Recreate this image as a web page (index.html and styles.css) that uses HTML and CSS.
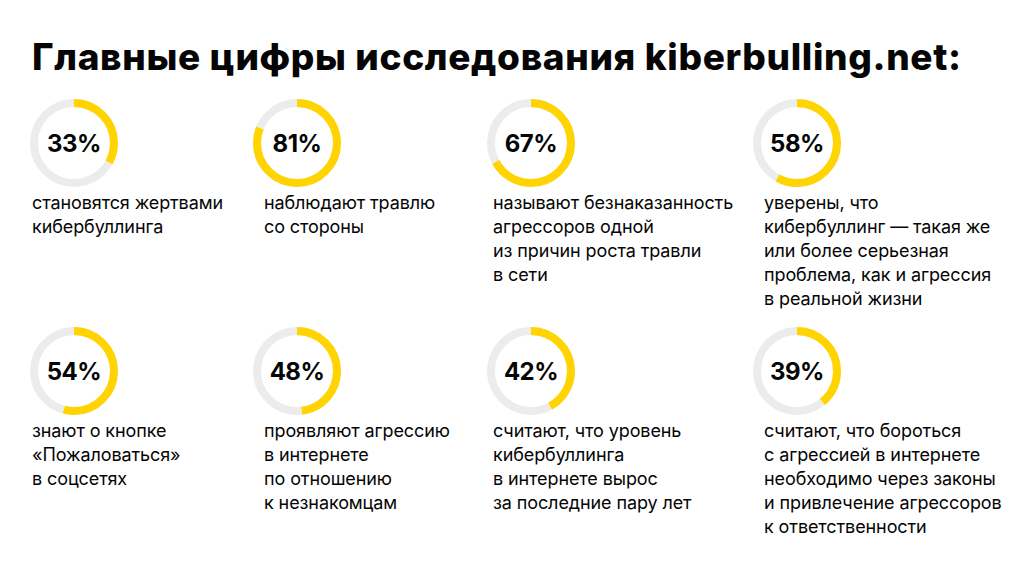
FILE: index.html
```html
<!DOCTYPE html>
<html lang="ru">
<head>
<meta charset="utf-8">
<title>Главные цифры исследования kiberbulling.net</title>
<link rel="stylesheet" href="styles.css">
</head>
<body>
<main class="page">
  <h1 class="title">Главные цифры исследования kiberbulling.net:</h1>
  <div class="grid">
    <div class="stat">
      <div class="donut">
        <svg viewBox="0 0 88 88" width="88" height="88"><circle class="track" cx="44" cy="44" r="40"/><circle class="fill" cx="44" cy="44" r="40" style="stroke-dasharray: 82.94 251.33"/></svg>
        <span class="value">33%</span>
      </div>
      <p class="desc">становятся жертвами<br>кибербуллинга</p>
    </div>
    <div class="stat">
      <div class="donut">
        <svg viewBox="0 0 88 88" width="88" height="88"><circle class="track" cx="44" cy="44" r="40"/><circle class="fill" cx="44" cy="44" r="40" style="stroke-dasharray: 203.58 251.33"/></svg>
        <span class="value">81%</span>
      </div>
      <p class="desc">наблюдают травлю<br>со стороны</p>
    </div>
    <div class="stat">
      <div class="donut">
        <svg viewBox="0 0 88 88" width="88" height="88"><circle class="track" cx="44" cy="44" r="40"/><circle class="fill" cx="44" cy="44" r="40" style="stroke-dasharray: 168.39 251.33"/></svg>
        <span class="value">67%</span>
      </div>
      <p class="desc">называют безнаказанность<br>агрессоров одной<br>из причин роста травли<br>в сети</p>
    </div>
    <div class="stat">
      <div class="donut">
        <svg viewBox="0 0 88 88" width="88" height="88"><circle class="track" cx="44" cy="44" r="40"/><circle class="fill" cx="44" cy="44" r="40" style="stroke-dasharray: 145.77 251.33"/></svg>
        <span class="value">58%</span>
      </div>
      <p class="desc">уверены, что<br>кибербуллинг — такая же<br>или более серьезная<br>проблема, как и агрессия<br>в реальной жизни</p>
    </div>
    <div class="stat">
      <div class="donut">
        <svg viewBox="0 0 88 88" width="88" height="88"><circle class="track" cx="44" cy="44" r="40"/><circle class="fill" cx="44" cy="44" r="40" style="stroke-dasharray: 135.72 251.33"/></svg>
        <span class="value">54%</span>
      </div>
      <p class="desc">знают о кнопке<br>«Пожаловаться»<br>в соцсетях</p>
    </div>
    <div class="stat">
      <div class="donut">
        <svg viewBox="0 0 88 88" width="88" height="88"><circle class="track" cx="44" cy="44" r="40"/><circle class="fill" cx="44" cy="44" r="40" style="stroke-dasharray: 120.64 251.33"/></svg>
        <span class="value">48%</span>
      </div>
      <p class="desc">проявляют агрессию<br>в интернете<br>по отношению<br>к незнакомцам</p>
    </div>
    <div class="stat">
      <div class="donut">
        <svg viewBox="0 0 88 88" width="88" height="88"><circle class="track" cx="44" cy="44" r="40"/><circle class="fill" cx="44" cy="44" r="40" style="stroke-dasharray: 105.56 251.33"/></svg>
        <span class="value">42%</span>
      </div>
      <p class="desc">считают, что уровень<br>кибербуллинга<br>в интернете вырос<br>за последние пару лет</p>
    </div>
    <div class="stat">
      <div class="donut">
        <svg viewBox="0 0 88 88" width="88" height="88"><circle class="track" cx="44" cy="44" r="40"/><circle class="fill" cx="44" cy="44" r="40" style="stroke-dasharray: 98.02 251.33"/></svg>
        <span class="value">39%</span>
      </div>
      <p class="desc">считают, что бороться<br>с агрессией в интернете<br>необходимо через законы<br>и привлечение агрессоров<br>к ответственности</p>
    </div>
  </div>
</main>
</body>
</html>
```

FILE: styles.css
```css
html, body {
  margin: 0;
  padding: 0;
  background: #ffffff;
}

body {
  font-family: Inter, "Noto Sans", "DejaVu Sans", sans-serif;
  color: #050505;
  width: 1024px;
  height: 576px;
  overflow: hidden;
}

.page {
  padding: 39px 0 0 32px;
}

.title {
  margin: 0 0 24px;
  font-size: 37px;
  line-height: 36px;
  font-weight: 800;
  letter-spacing: 0.65px;
}

.grid {
  display: grid;
  grid-template-columns: 232px 229px 271px 1fr;
  row-gap: 16px;
}

.stat {
  display: flex;
  flex-direction: column;
  align-items: flex-start;
}

.donut {
  position: relative;
  width: 88px;
  height: 88px;
}

.donut svg {
  display: block;
  transform: rotate(-90deg);
}

.track {
  fill: none;
  stroke: #ececec;
  stroke-width: 8;
}

.fill {
  fill: none;
  stroke: #ffd400;
  stroke-width: 8;
}

.value {
  position: absolute;
  inset: 0;
  display: flex;
  align-items: center;
  justify-content: center;
  font-size: 24px;
  font-weight: 700;
  letter-spacing: -0.5px;
}

.desc {
  margin: 4px 0 0;
  font-size: 18px;
  line-height: 24px;
  font-weight: 400;
  letter-spacing: -0.1px;
}

.stat:nth-child(4n+1) .donut { margin-left: -2px; }
.stat:nth-child(4n+2) .donut { margin-left: -11px; }
.stat:nth-child(4n+3) .donut { margin-left: -6px; }
.stat:nth-child(4n+4) .donut { margin-left: -11px; }
```
